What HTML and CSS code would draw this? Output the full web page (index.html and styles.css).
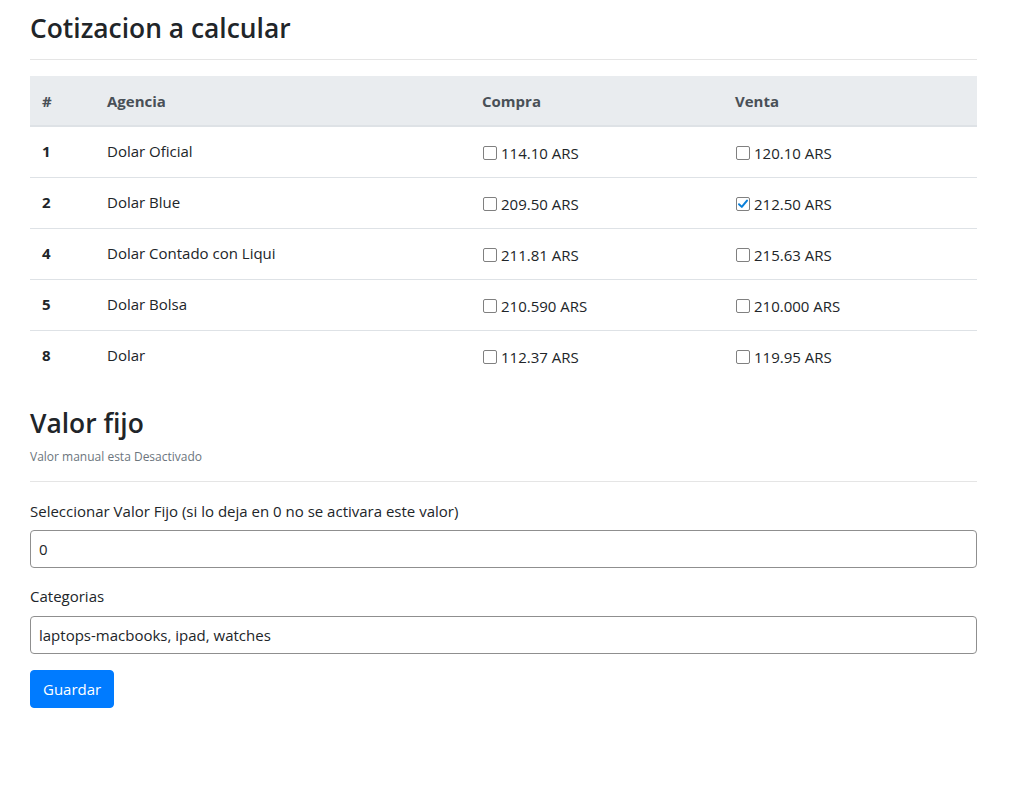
FILE: index.html
```html
<!DOCTYPE html>
<html lang="es">
<head>
<meta charset="utf-8">
<title>Cotizacion</title>
<link rel="stylesheet" href="styles.css">
</head>
<body>
<main class="page">
  <h2 class="title">Cotizacion a calcular</h2>
  <hr class="rule">
  <table class="quotes">
    <thead>
      <tr><th class="c-num">#</th><th class="c-agency">Agencia</th><th class="c-buy">Compra</th><th>Venta</th></tr>
    </thead>
    <tbody>
      <tr><th>1</th><td>Dolar Oficial</td><td><span class="check"></span>114.10 ARS</td><td><span class="check"></span>120.10 ARS</td></tr>
      <tr><th>2</th><td>Dolar Blue</td><td><span class="check"></span>209.50 ARS</td><td><span class="check is-checked"><svg viewBox="0 0 14 14" width="14" height="14"><path d="M3 7.2 L5.8 9.9 L11 3.6" fill="none" stroke="#0a7fd9" stroke-width="2" stroke-linecap="round" stroke-linejoin="round"/></svg></span>212.50 ARS</td></tr>
      <tr><th>4</th><td>Dolar Contado con Liqui</td><td><span class="check"></span>211.81 ARS</td><td><span class="check"></span>215.63 ARS</td></tr>
      <tr><th>5</th><td>Dolar Bolsa</td><td><span class="check"></span>210.590 ARS</td><td><span class="check"></span>210.000 ARS</td></tr>
      <tr><th>8</th><td>Dolar</td><td><span class="check"></span>112.37 ARS</td><td><span class="check"></span>119.95 ARS</td></tr>
    </tbody>
  </table>

  <h2 class="title title-2">Valor fijo</h2>
  <small class="note">Valor manual esta Desactivado</small>
  <hr class="rule rule-2">

  <form class="form">
    <div class="group">
      <label class="label" for="fijo">Seleccionar Valor Fijo (si lo deja en 0 no se activara este valor)</label>
      <input class="input" id="fijo" type="text" value="0">
    </div>
    <div class="group">
      <label class="label" for="cat">Categorias</label>
      <input class="input" id="cat" type="text" value="laptops-macbooks, ipad, watches">
    </div>
    <button class="btn" type="button">Guardar</button>
  </form>
</main>
</body>
</html>
```

FILE: styles.css
```css
html, body {
  margin: 0;
  padding: 0;
  background: #fff;
}
body {
  font-family: "Open Sans", "Noto Sans", "DejaVu Sans", sans-serif;
  font-size: 16px;
  line-height: 1.5;
  color: #212529;
}
.page {
  width: 947px;
  margin-left: 30px;
  display: flex;
  flex-direction: column;
}
.title {
  margin: 9px 0 0;
  font-size: 26.4px;
  font-weight: 600;
  line-height: 38px;
  color: #212529;
}
.rule {
  width: 100%;
  margin: 12px 0 16px;
  border: 0;
  border-top: 1px solid #e5e5e5;
  height: 0;
}
.quotes {
  width: 100%;
  border-collapse: collapse;
  margin-bottom: 23px;
}
.quotes thead th {
  background: #e9ecef;
  color: #495057;
  font-weight: 700;
  text-align: left;
  padding: 13px 12px 12px;
  height: 24px;
  border-bottom: 2px solid #dee2e6;
  font-size: 15px;
}
.quotes .c-num { width: 41px; }
.quotes .c-agency { width: 351px; }
.quotes .c-buy { width: 229px; }
.quotes tbody th,
.quotes tbody td {
  padding: 13px 12px 12px;
  height: 25px;
  text-align: left;
  vertical-align: top;
  border-top: 1px solid #dee2e6;
  font-size: 15px;
}
.quotes tbody tr:first-child th,
.quotes tbody tr:first-child td { border-top: 0; }
.quotes tbody tr + tr th,
.quotes tbody tr + tr td { border-top: 1px solid #dee2e6; }
.quotes tbody th { font-weight: 700; }
.quotes tbody td:nth-child(3),
.quotes tbody td:nth-child(4) { padding-top: 15px; padding-bottom: 10px; }
.check {
  display: inline-block;
  box-sizing: border-box;
  width: 14px;
  height: 14px;
  border: 1px solid #808080;
  border-radius: 2px;
  background: #fff;
  margin: 0 4px 0 1px;
  vertical-align: -1px;
  position: relative;
}
.check svg {
  position: absolute;
  left: -1px;
  top: -1px;
}
.title-2 { margin-top: 0; }
.note {
  display: block;
  margin-top: 5px;
  font-size: 12px;
  line-height: 19px;
  color: #6c757d;
}
.rule-2 { margin: 15px 0 17px; }
.form {
  display: flex;
  flex-direction: column;
  align-items: flex-start;
}
.group {
  display: flex;
  flex-direction: column;
  width: 100%;
  margin-bottom: 16px;
}
.label {
  margin-bottom: 7px;
  font-size: 15px;
  line-height: 24px;
}
.group + .group .label { margin-bottom: 8px; }
.input {
  box-sizing: border-box;
  width: 100%;
  height: 38px;
  padding: 6px 8px;
  font-family: inherit;
  font-size: 15px;
  color: #212529;
  border: 1px solid #8f8f8f;
  border-radius: 4px;
  background: #fff;
  outline: none;
}
.btn {
  box-sizing: border-box;
  height: 38px;
  padding: 6px 12px;
  font-family: inherit;
  font-size: 15px;
  color: #fff;
  background: #007bff;
  border: 1px solid #007bff;
  border-radius: 4px;
  cursor: pointer;
}
```
